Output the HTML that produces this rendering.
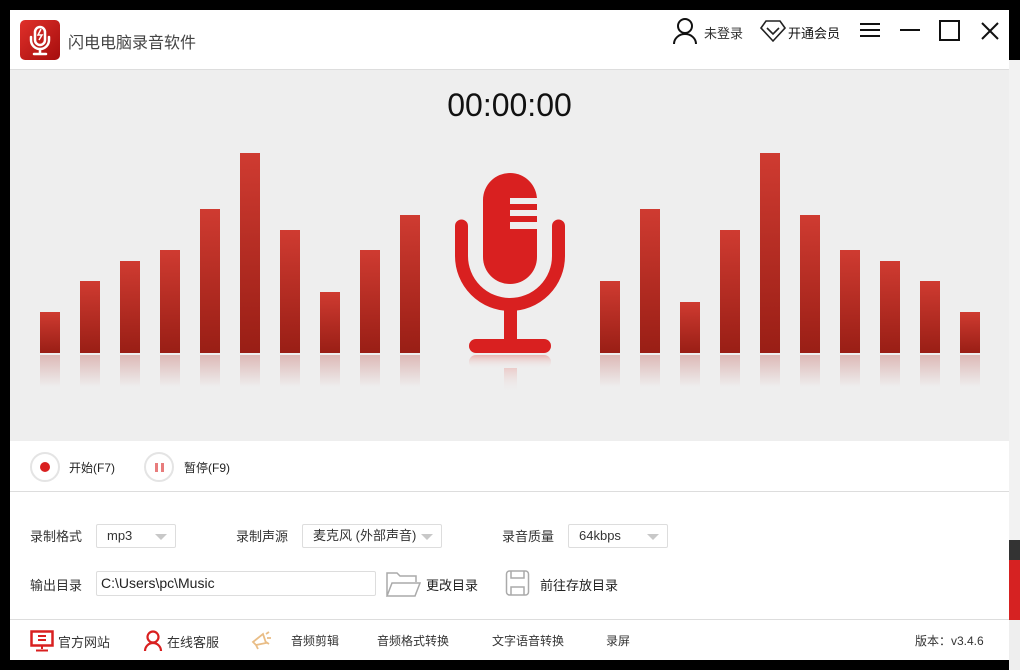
<!DOCTYPE html>
<html><head><meta charset="utf-8">
<style>
*{margin:0;padding:0;box-sizing:border-box}
body{width:1020px;height:670px;background:#000;position:relative;overflow:hidden;font-family:"Liberation Sans","Noto Sans CJK SC",sans-serif;color:#333}
.abs{position:absolute}
#win{left:10px;top:10px;width:999px;height:650px;background:#fff;overflow:hidden}
.t{font-size:13px;white-space:nowrap}
.bar{position:absolute;width:20px;background:linear-gradient(#cf3b31,#991e15)}
.ref{position:absolute;width:20px;top:355px;height:32px;background:linear-gradient(rgba(200,120,115,.45),rgba(238,238,238,0))}
.sel{position:absolute;height:24px;border:1px solid #ddd;border-radius:2px;background:#fff;font-size:13px;line-height:22px;padding-left:10px}
.sel:after{content:"";position:absolute;right:8px;top:9px;border-left:6px solid transparent;border-right:6px solid transparent;border-top:6px solid #c8c8c8}
</style></head><body>
<div class="abs" style="left:1009px;top:60px;width:11px;height:500px;background:#f2f2f2"></div>
<div class="abs" style="left:1009px;top:540px;width:11px;height:20px;background:#333"></div>
<div class="abs" style="left:1009px;top:560px;width:11px;height:60px;background:#d62222"></div>
<div class="abs" style="left:1009px;top:620px;width:11px;height:50px;background:#eee"></div>
<div id="win" class="abs">
 <div class="abs" style="left:10px;top:10px;width:40px;height:40px;border-radius:5px;background:linear-gradient(135deg,#e0302a,#a50d0d)">
  <svg width="40" height="40" viewBox="0 0 40 40"><rect x="15" y="7" width="10" height="18" rx="5" fill="none" stroke="#fff" stroke-width="2.5"/><path d="M11 17v3a9 9 0 0 0 18 0v-3M20 29v5M14 34h12" fill="none" stroke="#fff" stroke-width="2.5" stroke-linecap="round"/><path d="M21 9l-3 6h4l-3 5" stroke="#fff" stroke-width="1.5" fill="none"/></svg>
 </div>
 <div class="abs" style="left:58px;top:19px;font-size:16px;color:#444">闪电电脑录音软件</div>
 <svg class="abs" style="left:662px;top:6px" width="28" height="30" viewBox="0 0 28 30"><circle cx="13" cy="10" r="7" fill="none" stroke="#111" stroke-width="2"/><path d="M2 28a11 10 0 0 1 22 0" fill="none" stroke="#111" stroke-width="2"/></svg>
 <div class="abs t" style="left:694px;top:13px;color:#333">未登录</div>
 <svg class="abs" style="left:750px;top:8px" width="26" height="26" viewBox="0 0 26 26"><path d="M6 3h14l5 7-12 13L1 10z" fill="none" stroke="#222" stroke-width="1.6"/><path d="M7 10l6 6 6-6" fill="none" stroke="#222" stroke-width="1.6"/></svg>
 <div class="abs t" style="left:778px;top:13px;color:#111">开通会员</div>
 <svg class="abs" style="left:849px;top:11px" width="22" height="18"><path d="M1 3h20M1 9h20M1 15h20" stroke="#111" stroke-width="2"/></svg>
 <svg class="abs" style="left:889px;top:11px" width="22" height="18"><path d="M1 9h20" stroke="#111" stroke-width="2"/></svg>
 <svg class="abs" style="left:929px;top:10px" width="22" height="22"><rect x="1" y="1" width="19" height="19" fill="none" stroke="#111" stroke-width="2"/></svg>
 <svg class="abs" style="left:970px;top:11px" width="20" height="20"><path d="M2 2l16 16M18 2L2 18" stroke="#111" stroke-width="2"/></svg>
 <div class="abs" style="left:0;top:59px;width:999px;height:372px;background:#eeeeee;border-top:1px solid #ddd">
  <div class="abs" style="left:0;width:999px;top:17px;text-align:center;font-size:32px;color:#111">00:00:00</div>
 </div>
 <div id="bars" class="abs" style="left:-10px;top:-10px;width:1020px;height:450px"></div>
 <svg class="abs" style="left:425px;top:153px" width="130" height="230" viewBox="435 163 130 230">
  <defs><linearGradient id="rf" x1="0" y1="0" x2="0" y2="1"><stop offset="0" stop-color="#e9b5b2"/><stop offset="1" stop-color="#eee" stop-opacity="0"/></linearGradient></defs>
  <rect x="483" y="173" width="54" height="111" rx="27" fill="#d92020"/>
  <rect x="510" y="198" width="28" height="6" fill="#eee"/><rect x="510" y="210" width="28" height="6" fill="#eee"/><rect x="510" y="222" width="28" height="7" fill="#eee"/>
  <path d="M461.5 226v30a48.5 48.5 0 0 0 97 0v-30" fill="none" stroke="#d92020" stroke-width="13" stroke-linecap="round"/>
  <rect x="504" y="304" width="13" height="40" fill="#d92020"/>
  <rect x="469" y="339" width="82" height="14" rx="7" fill="#d92020"/>
  <rect x="469" y="355" width="82" height="14" rx="7" fill="url(#rf)"/>
  <rect x="504" y="368" width="13" height="25" fill="url(#rf)" opacity=".6"/>
 </svg>
 <div class="abs" style="left:20px;top:442px;width:30px;height:30px;border-radius:50%;border:2px solid #e4e4e4"><div class="abs" style="left:8px;top:8px;width:10px;height:10px;border-radius:50%;background:#d92020"></div></div>
 <div class="abs" style="left:59px;top:449px;font-size:12px;color:#222">开始(F7)</div>
 <div class="abs" style="left:134px;top:442px;width:30px;height:30px;border-radius:50%;border:2px solid #e4e4e4"><div class="abs" style="left:9px;top:9px;width:3px;height:9px;background:#e87c7c"></div><div class="abs" style="left:15px;top:9px;width:3px;height:9px;background:#e87c7c"></div></div>
 <div class="abs" style="left:174px;top:449px;font-size:12px;color:#222">暂停(F9)</div>
 <div class="abs" style="left:0;top:481px;width:999px;height:1px;background:#ddd"></div>
 <div class="abs t" style="left:20px;top:516px">录制格式</div>
 <div class="sel" style="left:86px;top:514px;width:80px">mp3</div>
 <div class="abs t" style="left:226px;top:516px">录制声源</div>
 <div class="sel" style="left:292px;top:514px;width:140px">麦克风 (外部声音)</div>
 <div class="abs t" style="left:492px;top:516px">录音质量</div>
 <div class="sel" style="left:558px;top:514px;width:100px">64kbps</div>
 <div class="abs t" style="left:20px;top:565px">输出目录</div>
 <div class="abs" style="left:86px;top:561px;width:280px;height:25px;border:1px solid #ddd;border-radius:2px;font-size:14px;line-height:23px;padding-left:4px;color:#222">C:\Users\pc\Music</div>
 <svg class="abs" style="left:375px;top:560px" width="36" height="28" viewBox="0 0 36 28"><path d="M2 26V3h10l3 3h16v6M2 26l5-13h28l-5 13z" fill="none" stroke="#aaa" stroke-width="1.5"/></svg>
 <div class="abs t" style="left:416px;top:565px;color:#222">更改目录</div>
 <svg class="abs" style="left:495px;top:559px" width="26" height="28" viewBox="0 0 26 28"><rect x="1.5" y="2" width="22" height="24" rx="3" fill="none" stroke="#aaa" stroke-width="1.5"/><path d="M6 2v7h13V2M6 26v-8h13v8" fill="none" stroke="#aaa" stroke-width="1.5"/></svg>
 <div class="abs t" style="left:530px;top:565px;color:#222">前往存放目录</div>
 <div class="abs" style="left:0;top:609px;width:999px;height:1px;background:#ddd"></div>
 <svg class="abs" style="left:20px;top:620px" width="24" height="22" viewBox="0 0 24 22"><rect x="1.5" y="1.5" width="21" height="14" fill="none" stroke="#d92020" stroke-width="2.5"/><path d="M8 6h8M8 10h8M12 16v3M6 20.5h12" stroke="#d92020" stroke-width="2"/></svg>
 <div class="abs t" style="left:48px;top:622px;color:#333">官方网站</div>
 <svg class="abs" style="left:133px;top:620px" width="20" height="22" viewBox="0 0 20 22"><circle cx="10" cy="7" r="5.5" fill="none" stroke="#d92020" stroke-width="2.2"/><path d="M2 21a8 8 0 0 1 16 0" fill="none" stroke="#d92020" stroke-width="2.2"/></svg>
 <div class="abs t" style="left:157px;top:622px;color:#333">在线客服</div>
 <svg class="abs" style="left:241px;top:620px" width="22" height="20" viewBox="0 0 22 20"><path d="M2 12l10-8 3 9-10 2zM5 15l2 4M15 4l3-2M16 8h4M15 12l3 2" fill="none" stroke="#e9bd86" stroke-width="1.8"/></svg>
 <div class="abs" style="left:281px;top:622px;font-size:12px;color:#333">音频剪辑</div>
 <div class="abs" style="left:367px;top:622px;font-size:12px;color:#333">音频格式转换</div>
 <div class="abs" style="left:482px;top:622px;font-size:12px;color:#333">文字语音转换</div>
 <div class="abs" style="left:596px;top:622px;font-size:12px;color:#333">录屏</div>
 <div class="abs" style="left:905px;top:622px;font-size:12px;color:#333">版本：v3.4.6</div>
</div>
<script>
var L=[312,281,261,250,209,153,230,292,250,215],R=[281,209,302,230,153,215,250,261,281,312],h='';
L.forEach(function(t,i){var x=40+i*40;h+='<div class="bar" style="left:'+x+'px;top:'+t+'px;height:'+(353-t)+'px"></div><div class="ref" style="left:'+x+'px"></div>';});
R.forEach(function(t,i){var x=600+i*40;h+='<div class="bar" style="left:'+x+'px;top:'+t+'px;height:'+(353-t)+'px"></div><div class="ref" style="left:'+x+'px"></div>';});
document.getElementById('bars').innerHTML=h;
</script>
</body></html>
